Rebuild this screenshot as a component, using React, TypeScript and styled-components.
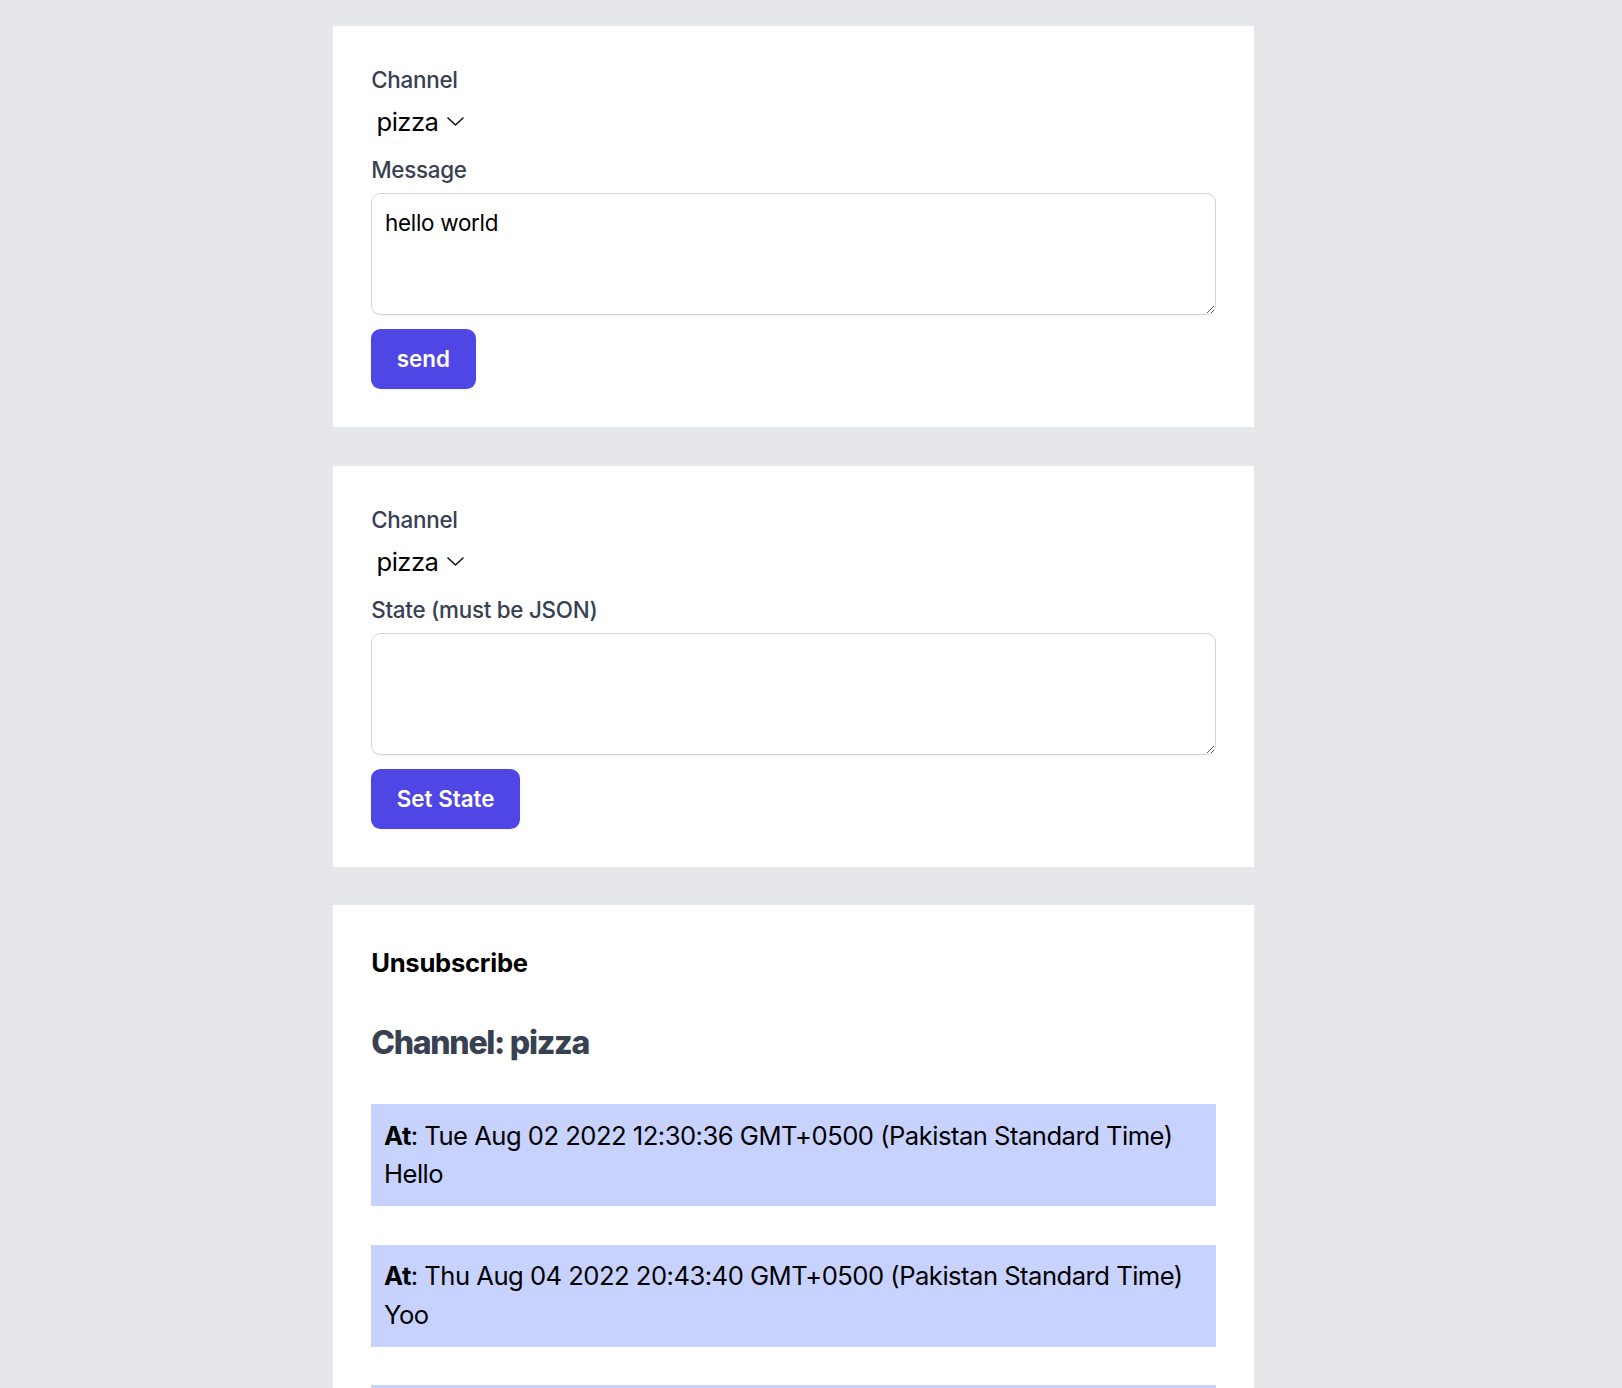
import React from "react";
import styled, { createGlobalStyle } from "styled-components";

const GlobalStyle = createGlobalStyle`
  * { box-sizing: border-box; }
  html, body { margin: 0; padding: 0; }
  body {
    background: #e5e7eb;
    font-family: Inter, "Noto Sans", "Liberation Sans", sans-serif;
    color: #000;
  }
`;

const Page = styled.main`
  display: flex;
  flex-direction: column;
  gap: 38.4px;
  width: 921.6px;
  margin-left: 332.8px;
  padding: 26px 0 40px;
`;

const Card = styled.section`
  display: flex;
  flex-direction: column;
  align-items: flex-start;
  background: #ffffff;
  padding: 38.4px;
`;

const Label = styled.label`
  display: block;
  font-size: 22.4px;
  line-height: 32px;
  font-weight: 500;
  letter-spacing: -0.012em;
  color: #374151;
`;

const SelectRow = styled.div`
  display: flex;
  align-items: center;
  height: 38.4px;
  margin: 6.4px 0 12.8px;
  color: #111;
`;

const Select = styled.select`
  appearance: none;
  -webkit-appearance: none;
  border: none;
  background: transparent;
  font-family: inherit;
  font-size: 25.6px;
  line-height: 38.4px;
  letter-spacing: -0.02em;
  color: #000;
  padding: 0 9px 0 5.3px;
  margin: 0;
  outline: none;
`;

const Chevron = styled.svg`
  width: 17px;
  height: 9px;
  flex: none;
`;

const TextArea = styled.textarea`
  display: block;
  width: 100%;
  height: 122px;
  margin-top: 7.3px;
  padding: 12.8px;
  border: 1px solid #d1d5db;
  border-radius: 9.6px;
  box-shadow: 0 1px 2px rgba(0, 0, 0, 0.05);
  font-family: inherit;
  font-size: 22.4px;
  line-height: 32px;
  letter-spacing: -0.012em;
  color: #000;
  background: #fff;
  outline: none;
`;

const PrimaryButton = styled.button`
  margin-top: 13.7px;
  height: 60px;
  padding: 0 25.6px;
  border: none;
  border-radius: 9.6px;
  background: #4f46e5;
  color: #ffffff;
  font-family: inherit;
  font-size: 22.4px;
  font-weight: 600;
  line-height: 32px;
  letter-spacing: 0;
  box-shadow: 0 1px 2px rgba(0, 0, 0, 0.05);
  cursor: pointer;
`;

const TextButton = styled.button`
  border: none;
  background: transparent;
  padding: 0;
  font-family: inherit;
  font-size: 25.6px;
  line-height: 38.4px;
  font-weight: 700;
  letter-spacing: -0.01em;
  color: #000;
  cursor: pointer;
`;

const ChannelTitle = styled.h2`
  margin: 38.4px 0 0;
  font-size: 32px;
  line-height: 44.8px;
  font-weight: 800;
  letter-spacing: -0.04em;
  color: #374151;
`;

const MessageList = styled.div`
  display: flex;
  flex-direction: column;
  gap: 38.4px;
  margin-top: 38.4px;
  width: 100%;
`;

const MessageItem = styled.div`
  background: #c7d2fe;
  padding: 12.8px;
  font-size: 25.6px;
  line-height: 38.4px;
  letter-spacing: -0.02em;
  color: #000;
  white-space: nowrap;
  overflow: hidden;
`;

const Strong = styled.b`
  font-weight: 700;
`;

const ChannelSelect: React.FC = () => (
  <SelectRow>
    <Select defaultValue="pizza">
      <option value="pizza">pizza</option>
    </Select>
    <Chevron viewBox="0 0 17 9" fill="none">
      <path d="M1 1 L8.5 8 L16 1" stroke="currentColor" strokeWidth="1.6" strokeLinecap="round" strokeLinejoin="round" />
    </Chevron>
  </SelectRow>
);

const messages = [
  { at: "Tue Aug 02 2022 12:30:36 GMT+0500 (Pakistan Standard Time)", text: "Hello" },
  { at: "Thu Aug 04 2022 20:43:40 GMT+0500 (Pakistan Standard Time)", text: "Yoo" },
  { at: "Thu Aug 04 2022 20:45:12 GMT+0500 (Pakistan Standard Time)", text: "Hi" },
];

export default function App() {
  return (
    <>
      <GlobalStyle />
      <Page>
        <Card>
          <Label>Channel</Label>
          <ChannelSelect />
          <Label>Message</Label>
          <TextArea defaultValue="hello world" />
          <PrimaryButton>send</PrimaryButton>
        </Card>
        <Card>
          <Label>Channel</Label>
          <ChannelSelect />
          <Label>State (must be JSON)</Label>
          <TextArea defaultValue="" />
          <PrimaryButton>Set State</PrimaryButton>
        </Card>
        <Card>
          <TextButton>Unsubscribe</TextButton>
          <ChannelTitle>Channel: pizza</ChannelTitle>
          <MessageList>
            {messages.map((m, i) => (
              <MessageItem key={i}>
                <Strong>At</Strong>: {m.at}
                <br />
                {m.text}
              </MessageItem>
            ))}
          </MessageList>
        </Card>
      </Page>
    </>
  );
}
